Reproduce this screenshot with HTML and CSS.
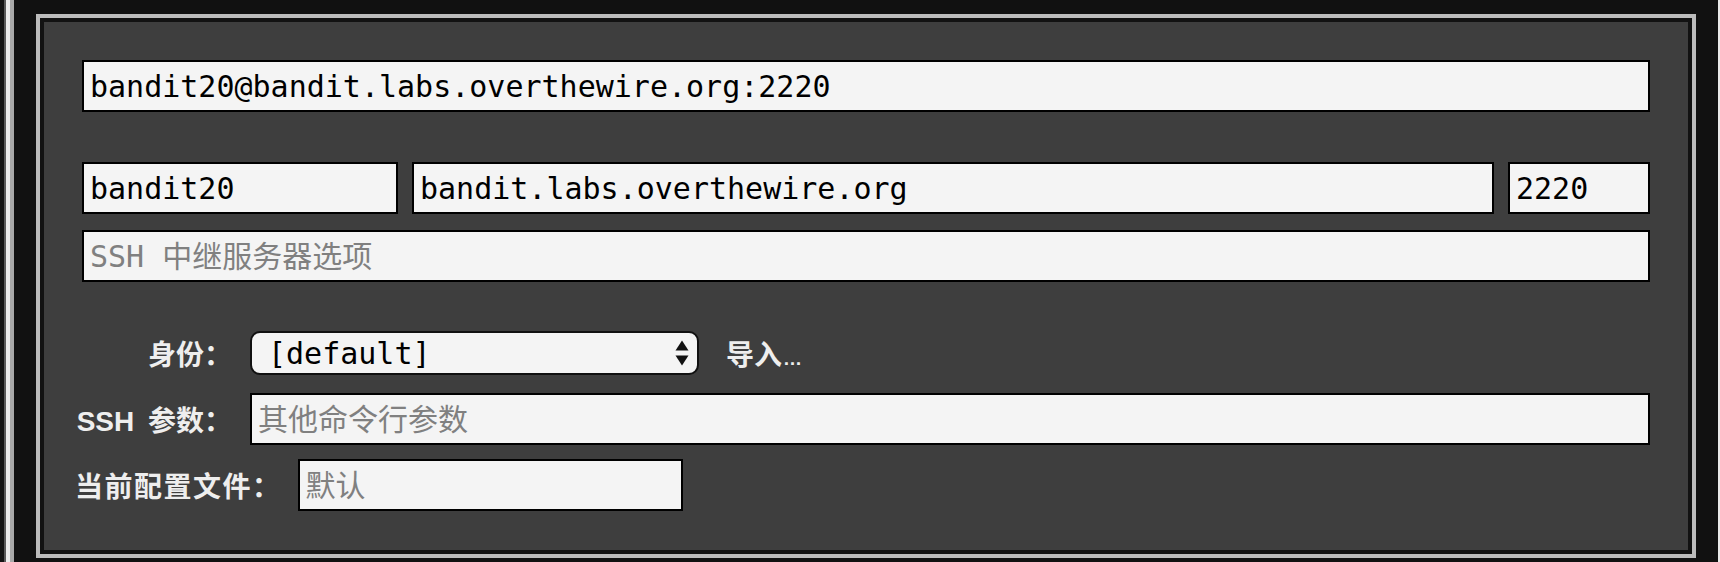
FILE: index.html
```html
<!DOCTYPE html>
<html lang="zh-CN">
<head>
<meta charset="utf-8">
<title>SSH</title>
<link rel="stylesheet" href="styles.css">
</head>
<body>
<div class="screen">
  <div class="frame">
    <div class="panel">
      <input class="field" type="text" value="bandit20@bandit.labs.overthewire.org:2220">
      <div class="split">
        <input class="field user" type="text" value="bandit20">
        <input class="field host" type="text" value="bandit.labs.overthewire.org">
        <input class="field port" type="text" value="2220">
      </div>
      <input class="field relay" type="text" placeholder="SSH 中继服务器选项">
      <div class="form-grid">
        <label class="label">身份：</label>
        <div class="id-row">
          <div class="select">
            <span class="select-text">[default]</span>
            <svg class="select-arrows" width="14" height="28" viewBox="0 0 14 28"><polygon points="0.5,11.5 7,1.5 13.5,11.5" fill="#111"/><polygon points="0.5,16.5 13.5,16.5 7,26.5" fill="#111"/></svg>
          </div>
          <span class="import">导入<span class="ellipsis">…</span></span>
        </div>
        <label class="label">SSH 参数：</label>
        <input class="field" type="text" placeholder="其他命令行参数">
      </div>
      <div class="profile-row">
        <label class="label">当前配置文件：</label>
        <input class="field profile" type="text" placeholder="默认">
      </div>
    </div>
  </div>
</div>
</body>
</html>
```

FILE: styles.css
```css
html, body {
  margin: 0;
  padding: 0;
}

body {
  background: #111111;
  width: 1720px;
  height: 562px;
  overflow: hidden;
}

.screen {
  box-sizing: border-box;
  height: 562px;
  padding: 14px 24px 4px 36px;
  background:
    linear-gradient(to right, #141414 0 4px, #5a5a5a 4px 6px, #ececec 6px 10px, #a9a9a9 10px 14px, transparent 14px),
    linear-gradient(to left, #e9e9e9 0 2px, transparent 2px),
    #111111;
}

.frame {
  box-sizing: border-box;
  height: 100%;
  border: 4px solid #bcbcbc;
}

.panel {
  box-sizing: border-box;
  height: 100%;
  border: 4px solid #121212;
  background: #3e3e3e;
  padding: 38px 38px 37px;
  display: flex;
  flex-direction: column;
}

.field {
  box-sizing: border-box;
  display: block;
  width: 100%;
  height: 52px;
  margin: 0;
  border: 2px solid #000;
  border-radius: 0;
  background: #f4f4f4;
  padding: 0 6px;
  font-family: "DejaVu Sans Mono", "Noto Sans CJK SC", monospace;
  font-size: 30px;
  color: #000;
  outline: none;
}

.field::placeholder {
  color: #808080;
  opacity: 1;
}

.split {
  display: flex;
  gap: 14px;
  margin-top: 50px;
}

.split .user {
  flex: 0 0 316px;
}

.split .host {
  flex: 1 1 auto;
  width: auto;
}

.split .port {
  flex: 0 0 142px;
}

.relay {
  margin-top: 16px;
}

.form-grid {
  display: grid;
  grid-template-columns: 157px 1fr;
  grid-auto-rows: 52px;
  column-gap: 18px;
  row-gap: 14px;
  margin-top: 45px;
  margin-left: -7px;
  align-items: center;
}

.label {
  font-family: "Liberation Sans", "Noto Sans CJK SC", sans-serif;
  font-size: 28px;
  font-weight: 700;
  color: #eeeeee;
  white-space: nowrap;
  word-spacing: 6px;
}

.form-grid .label {
  text-align: right;
}

.id-row {
  display: flex;
  align-items: center;
  height: 52px;
}

.select {
  box-sizing: border-box;
  width: 449px;
  height: 44px;
  border: 2px solid #111;
  border-radius: 10px;
  background: #f4f4f4;
  display: flex;
  align-items: center;
  justify-content: space-between;
  padding: 0 8px 0 16px;
}

.select-text {
  font-family: "DejaVu Sans Mono", monospace;
  font-size: 30px;
  color: #000;
}

.select-arrows {
  display: block;
}

.import {
  margin-left: 27px;
  font-family: "Noto Sans CJK SC", sans-serif;
  font-size: 28px;
  font-weight: 700;
  color: #eeeeee;
}

.ellipsis {
  font-family: "Liberation Sans", sans-serif;
  font-size: 19px;
  font-weight: 700;
  margin-left: 1px;
}

.profile-row {
  display: flex;
  align-items: center;
  gap: 16px;
  margin-top: 14px;
  margin-left: -7px;
}

.profile-row .label {
  letter-spacing: 1.5px;
}

.profile {
  width: 385px;
}
```
